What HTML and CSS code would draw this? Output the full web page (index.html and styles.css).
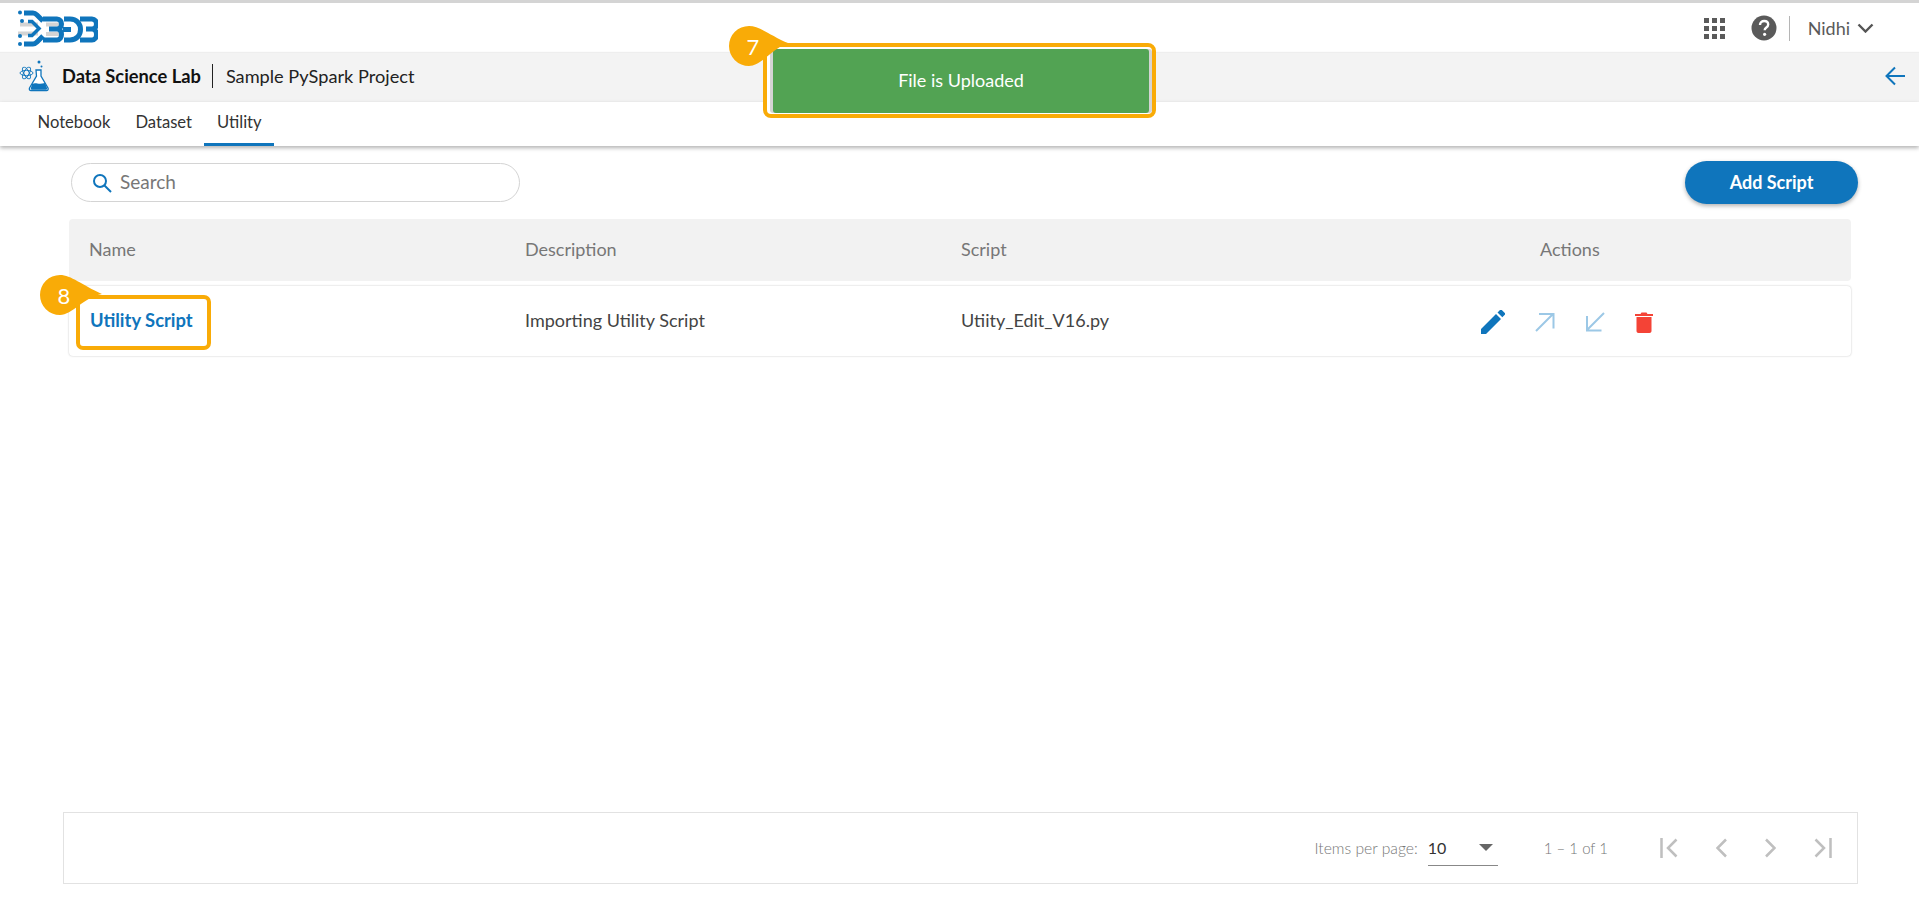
FILE: index.html
```html
<!DOCTYPE html>
<html lang="en">
<head>
<meta charset="utf-8">
<title>Data Science Lab</title>
<link rel="stylesheet" href="styles.css">
</head>
<body>
<div class="page">
  <header class="topbar">
    <svg class="logo" width="82" height="37" viewBox="0 0 82 37">
      <g fill="none" stroke="#d4d4d4" stroke-width="4"><path d="M4 14.500H22M2 23.500H22M30 14.500H44M30 24H44"/></g>
      <g fill="none" stroke="#0f75bc" stroke-width="5">
        <path d="M8 3H17C19 3 20 4 21 5L27 11"/>
        <path d="M8 34H17C19 34 20 33 21 32L27 26"/>
        <path d="M27 9H41C47 9 47 19 41 19H33M41 19C47 19 47 30 41 30H27"/>
        <path d="M48 9H54C68 9 68 30 54 30H48"/>
        <path d="M47 19.500H55"/>
        <path d="M64 9H76C82 9 82 19 76 19H70M76 19C82 19 82 30 76 30H64"/>
      </g>
      <g fill="none" stroke="#0f75bc" stroke-width="3.500"><path d="M12 11.500H16L23 18.500L16 25.500H12"/></g>
      <g fill="#0f75bc"><circle cx="4" cy="2.500" r="2"/><circle cx="6" cy="11" r="2"/><circle cx="4" cy="26" r="2"/><circle cx="4" cy="34" r="2"/></g>
    </svg>
    <div class="topbar-right">
      <svg class="apps" width="21" height="21" viewBox="0 0 21 21" fill="#5a5a5a">
        <rect width="5" height="5"/><rect x="8" width="5" height="5"/><rect x="16" width="5" height="5"/>
        <rect y="8" width="5" height="5"/><rect x="8" y="8" width="5" height="5"/><rect x="16" y="8" width="5" height="5"/>
        <rect y="16" width="5" height="5"/><rect x="8" y="16" width="5" height="5"/><rect x="16" y="16" width="5" height="5"/>
      </svg>
      <svg class="help" width="26" height="26" viewBox="0 0 26 26">
        <circle cx="13" cy="13" r="12.500" fill="#5a5a5a"/>
        <path d="M9 10c0-2.500 1.800-4 4.200-4 2.300 0 4 1.400 4 3.500 0 1.700-1 2.500-2.100 3.300-1 .7-1.400 1.200-1.400 2.500" fill="none" stroke="#fff" stroke-width="2.400"/>
        <circle cx="13.600" cy="19.300" r="1.600" fill="#fff"/>
      </svg>
      <span class="vr"></span>
      <span class="user">Nidhi</span>
      <svg class="chev" width="17" height="10" viewBox="0 0 17 10"><path d="M1.500 1.500l7 7 7-7" fill="none" stroke="#555" stroke-width="2.400"/></svg>
    </div>
  </header>
  <div class="titlebar">
    <svg class="flask" width="32" height="32" viewBox="0 0 32 32" fill="none" stroke="#0f75bc">
      <g stroke-width=".9"><ellipse cx="7.500" cy="13" rx="6.500" ry="2.600" transform="rotate(60 7.500 13)"/><ellipse cx="7.500" cy="13" rx="6.500" ry="2.600" transform="rotate(-60 7.500 13)"/><ellipse cx="7.500" cy="13" rx="6.500" ry="2.600"/></g>
      <path d="M17 10h5v6l7 12c.6 1.500-.2 2.500-1.500 2.500H12c-1.300 0-2.100-1-1.500-2.500l7-12z" stroke-width="1.300" fill="#fff"/>
      <path d="M13 24c4-2 6 1 13-1l2 5c.3 1-.2 1.700-1 1.700H13c-1 0-1.500-.7-1.100-1.700z" fill="#0f75bc" stroke="none"/>
      <circle cx="20" cy="2" r="1.500" fill="#0f75bc" stroke="none"/><circle cx="22.500" cy="6.500" r="1" fill="#0f75bc" stroke="none"/>
    </svg>
    <strong class="app-name">Data Science Lab</strong>
    <span class="project">Sample PySpark Project</span>
    <svg class="back" width="20" height="20" viewBox="0 0 20 20"><path d="M20 10H2M10 1.500L1.500 10l8.500 8.500" fill="none" stroke="#0f75bc" stroke-width="2"/></svg>
  </div>
  <nav class="tabs">
    <a class="tab">Notebook</a>
    <a class="tab">Dataset</a>
    <a class="tab active">Utility</a>
  </nav>
  <main class="content">
    <div class="toolbar">
      <label class="search">
        <svg width="20" height="20" viewBox="0 0 20 20" fill="none" stroke="#0f75bc" stroke-width="2"><circle cx="8" cy="8" r="6"/><path d="M12.500 12.500L19 19"/></svg>
        <span class="search-text">Search</span>
      </label>
      <button class="add">Add Script</button>
    </div>
    <div class="table">
      <div class="row head">
        <div>Name</div><div>Description</div><div>Script</div><div class="actions-h">Actions</div>
      </div>
      <div class="row body">
        <div class="name">Utility Script</div>
        <div>Importing Utility Script</div>
        <div>Utiity_Edit_V16.py</div>
        <div class="actions">
          <svg width="24" height="24" viewBox="0 0 24 24" fill="#0f75bc"><path d="M0 24v-5L15 4l5 5L5 24zM16.500 2.500L19 0c.6-.5 1.300-.5 1.800 0l3 3c.5.500.5 1.200 0 1.800l-2.500 2.500z"/></svg>
          <svg class="arrow" width="20" height="20" viewBox="0 0 20 20" fill="none" stroke="#9cc8e6" stroke-width="2"><path d="M1 19L18 2M4 2h14.500v14.500"/></svg>
          <svg class="arrow" width="20" height="20" viewBox="0 0 20 20" fill="none" stroke="#9cc8e6" stroke-width="2"><path d="M19 1L2 18M2 4v14.500h14.500"/></svg>
          <svg width="18" height="22" viewBox="0 0 18 22" fill="#f44336"><path d="M0 3h5.500l1-1.500h5l1 1.500H18v2H0zM1.500 6h15v14c0 1-.8 2-2 2h-11c-1.200 0-2-1-2-2z"/></svg>
        </div>
      </div>
    </div>
    <footer class="pager">
      <span class="ipp">Items per page:</span>
      <div class="select"><span>10</span><i class="caret"></i></div>
      <span class="range">1 – 1 of 1</span>
      <div class="pager-btns">
        <svg width="18" height="20" viewBox="0 0 18 20" fill="none" stroke="#bfbfbf" stroke-width="2.500"><path d="M1.500 0v20M16.500 1.500L8 10l8.500 8.500"/></svg>
        <svg width="11" height="20" viewBox="0 0 11 20" fill="none" stroke="#bfbfbf" stroke-width="2.500"><path d="M10 1.500L1.500 10l8.500 8.500"/></svg>
        <svg width="11" height="20" viewBox="0 0 11 20" fill="none" stroke="#bfbfbf" stroke-width="2.500"><path d="M1 1.500L9.500 10 1 18.500"/></svg>
        <svg width="18" height="20" viewBox="0 0 18 20" fill="none" stroke="#bfbfbf" stroke-width="2.500"><path d="M16.500 0v20M1.500 1.500L10 10l-8.500 8.500"/></svg>
      </div>
    </footer>
  </main>
</div>
<div class="toast-frame"><div class="toast">File is Uploaded</div></div>
<div class="bubble bubble-7">
  <svg class="drop" width="62" height="40" viewBox="0 0 62 40"><path d="M20 0C31 0 42 10 59 17C44 22 32 40 20 40A20 20 0 0 1 20 0Z" fill="#f9ab07"/></svg>
  <span>7</span>
</div>
<div class="name-frame"></div>
<div class="bubble bubble-8">
  <svg class="drop" width="62" height="40" viewBox="0 0 62 40"><path d="M20 0C31 0 42 10 62 19C44 22 32 40 20 40A20 20 0 0 1 20 0Z" fill="#f9ab07"/></svg>
  <span>8</span>
</div>
</body>
</html>
```
FILE: styles.css
```css
* { box-sizing: border-box; }
html, body { margin: 0; height: 100%; overflow: hidden; }
body { background: #fff; font-family: "Lato", "Noto Sans", sans-serif; color: #333; position: relative; }
.page { height: 905px; display: flex; flex-direction: column; border-top: 3px solid #d4d4d4; }
.topbar { height: 50px; flex: none; display: flex; align-items: center; justify-content: space-between; padding: 0 45px 0 16px; }
.topbar-right { display: flex; align-items: center; }
.apps { margin-right: 26px; }
.help { margin-right: 12px; }
.vr { width: 1px; height: 25px; background: #b5b5b5; margin-right: 18px; }
.user { font-size: 18px; color: #5a5a5a; margin-right: 7px; }
.titlebar { height: 49px; flex: none; background: #f3f3f3; display: flex; align-items: center; padding: 0 14px 3px 19px; box-shadow: 0 -1px 1px #eee; }
.flask { margin-right: 11px; }
.app-name { font-size: 18.300px; font-weight: 700; color: #111; padding-right: 11px; border-right: 1px solid #222; line-height: 24px; margin-right: 13px; }
.project { font-size: 18.200px; color: #222; flex: 1; }
.tabs { height: 44px; flex: none; display: flex; padding-left: 25px; box-shadow: 0 2px 4px rgba(0,0,0,.3); position: relative; }
.tab { padding: 0 12.500px; font-size: 16.600px; line-height: 40px; color: #333; border-bottom: 3px solid transparent; }
.active { border-bottom-color: #0f75bc; }
.content { flex: 1; display: flex; flex-direction: column; padding: 15px 61px 21px 63px; }
.toolbar { display: flex; justify-content: space-between; align-items: center; height: 43px; padding-left: 8px; }
.search { width: 449px; height: 39px; border: 1px solid #d4d4d4; border-radius: 20px; display: flex; align-items: center; gap: 8px; padding-left: 20px; color: #777; font-size: 19px; }
.search-text { padding-bottom: 2px; }
.add { width: 173px; height: 43px; border: 0; border-radius: 22px; background: #0f75bc; color: #fff; font: 700 18px "Lato", "Noto Sans", sans-serif; box-shadow: 0 2px 4px rgba(0,0,0,.3); padding-bottom: 2px; }
.table { margin: 15px 7px 0 6px; flex: 1; }
.row { display: grid; grid-template-columns: 436px 436px 1fr 280px; align-items: center; font-size: 18px; padding: 0 0 2px 20px; border-radius: 4px; }
.head { height: 62px; background: #f2f2f2; color: #777; }
.actions-h { margin-left: -31px; }
.body { height: 70px; margin-top: 5px; box-shadow: 0 0 2px rgba(0,0,0,.25); color: #444; }
.name { color: #0f75bc; font-weight: 700; font-size: 18.400px; padding-left: 1px; }
.actions { display: flex; align-items: center; margin-left: -90px; gap: 30px; padding-top: 4px; }
.pager { height: 72px; border: 1px solid #e2e2e2; display: flex; align-items: center; font-size: 15.700px; color: #777; }
.ipp { margin-left: auto; font-weight: 300; }
.select { width: 70px; height: 36px; margin-left: 10px; border-bottom: 1px solid #888; display: flex; align-items: center; justify-content: space-between; padding-right: 5px; color: #333; font-size: 16px; }
.caret { width: 0; height: 0; border: 7px solid transparent; border-top-color: #666; border-bottom: 0; }
.range { margin-left: 46px; font-weight: 300; font-size: 15px; }
.pager-btns { display: flex; align-items: center; gap: 38px; margin-left: 52px; margin-right: 25px; }
.toast-frame { position: absolute; left: 763px; top: 43px; width: 393px; height: 75px; border: 4px solid #f9ab07; border-radius: 8px; background: #fff; padding: 2px 3px 1px 6px; }
.toast { height: 100%; background: #52a353; border-radius: 3px; box-shadow: -3px 0 0 #d4d4d4, 3px 0 0 #d4d4d4; color: #fff; display: flex; align-items: center; justify-content: center; font-size: 18px; padding-bottom: 2px; }
.name-frame { position: absolute; left: 76px; top: 295px; width: 135px; height: 55px; border: 4px solid #f9ab07; border-radius: 7px; }
.bubble { position: absolute; width: 62px; height: 40px; color: #fff; font-size: 22px; }
.drop { position: absolute; left: 0; top: 0; }
.bubble span { position: absolute; left: 24px; top: 20px; transform: translate(-50%, -50%); }
.bubble-7 { left: 729px; top: 26px; }
.bubble-8 { left: 40px; top: 275px; }
```
